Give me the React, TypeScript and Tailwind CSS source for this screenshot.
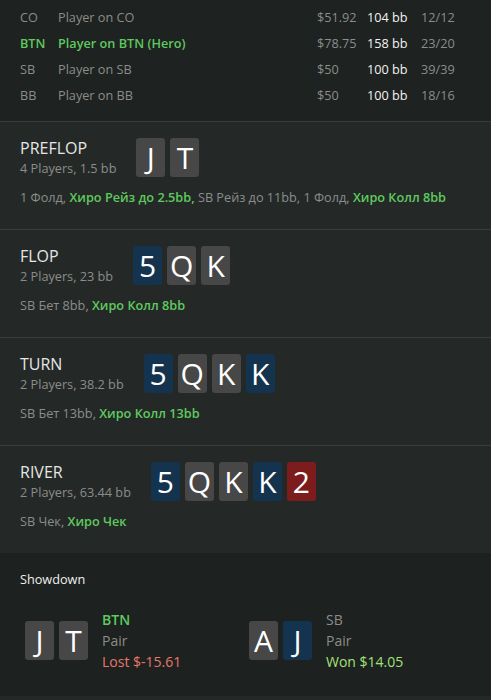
import type { ReactNode } from 'react'

type Tone = 'gray' | 'blue' | 'red'

const CARD_BG: Record<Tone, string> = {
  gray: 'bg-[#474747]',
  blue: 'bg-[#14334f]',
  red: 'bg-[#7d1c1c]',
}

const PLAYERS = [
  { pos: 'CO', name: 'Player on CO', stack: '$51.92', bb: '104 bb', ratio: '12/12', hero: false },
  { pos: 'BTN', name: 'Player on BTN (Hero)', stack: '$78.75', bb: '158 bb', ratio: '23/20', hero: true },
  { pos: 'SB', name: 'Player on SB', stack: '$50', bb: '100 bb', ratio: '39/39', hero: false },
  { pos: 'BB', name: 'Player on BB', stack: '$50', bb: '100 bb', ratio: '18/16', hero: false },
]

type Street = {
  name: string
  info: string
  cards: [string, Tone][]
  actions: ReactNode
}

const Hero = ({ children }: { children: ReactNode }) => (
  <span className="font-semibold text-[#5fc95f]">{children}</span>
)

const STREETS: Street[] = [
  {
    name: 'PREFLOP',
    info: '4 Players, 1.5 bb',
    cards: [
      ['J', 'gray'],
      ['T', 'gray'],
    ],
    actions: (
      <>
        1 Фолд, <Hero>Хиро Рейз до 2.5bb,</Hero> SB Рейз до 11bb, 1 Фолд, <Hero>Хиро Колл 8bb</Hero>
      </>
    ),
  },
  {
    name: 'FLOP',
    info: '2 Players, 23 bb',
    cards: [
      ['5', 'blue'],
      ['Q', 'gray'],
      ['K', 'gray'],
    ],
    actions: (
      <>
        SB Бет 8bb, <Hero>Хиро Колл 8bb</Hero>
      </>
    ),
  },
  {
    name: 'TURN',
    info: '2 Players, 38.2 bb',
    cards: [
      ['5', 'blue'],
      ['Q', 'gray'],
      ['K', 'gray'],
      ['K', 'blue'],
    ],
    actions: (
      <>
        SB Бет 13bb, <Hero>Хиро Колл 13bb</Hero>
      </>
    ),
  },
  {
    name: 'RIVER',
    info: '2 Players, 63.44 bb',
    cards: [
      ['5', 'blue'],
      ['Q', 'gray'],
      ['K', 'gray'],
      ['K', 'blue'],
      ['2', 'red'],
    ],
    actions: (
      <>
        SB Чек, <Hero>Хиро Чек</Hero>
      </>
    ),
  },
]

function Card({ rank, tone }: { rank: string; tone: Tone }) {
  return (
    <div
      className={`flex h-[39px] w-[29px] items-center justify-center rounded-[3px] text-[30px] leading-none text-white ${CARD_BG[tone]}`}
    >
      {rank}
    </div>
  )
}

export default function App() {
  return (
    <div
      className="h-[700px] w-[491px] overflow-hidden bg-[#242927] text-[12.7px] text-[#8c8c8c]"
      style={{ fontFamily: '"Open Sans", "Noto Sans", sans-serif' }}
    >
      <div className="bg-[#1e2220] px-5 pb-[12px] pt-[5px]">
        {PLAYERS.map((p) => (
          <div
            key={p.pos}
            className={`grid h-[26px] grid-cols-[38px_259px_50px_54px_auto] items-center ${
              p.hero ? 'font-semibold text-[#5fc95f]' : ''
            }`}
          >
            <span>{p.pos}</span>
            <span>{p.name}</span>
            <span className="font-normal text-[#8c8c8c]">{p.stack}</span>
            <span className="font-normal text-[#f2f2f2]">{p.bb}</span>
            <span className="font-normal text-[#8c8c8c]">{p.ratio}</span>
          </div>
        ))}
      </div>

      {STREETS.map((s) => (
        <div key={s.name} className="border-t border-[#363d3a] px-5 pb-[22px] pt-4">
          <div className="flex items-center gap-5">
            <div>
              <div className="text-[16px] leading-[21px] text-[#e6e6e6]">{s.name}</div>
              <div className="leading-[18px]">{s.info}</div>
            </div>
            <div className="flex gap-[5px]">
              {s.cards.map(([r, t], i) => (
                <Card key={i} rank={r} tone={t} />
              ))}
            </div>
          </div>
          <div className="mt-[10px] leading-[20px]">{s.actions}</div>
        </div>
      ))}

      <div className="bg-[#1d211f] px-5 pb-[24px] pt-[16px]">
        <div className="leading-[20px] text-[#f0f0f0]">Showdown</div>
        <div className="mt-[20px] flex pl-[5px]">
          <div className="flex w-[224px] items-center gap-[5px]">
            <Card rank="J" tone="gray" />
            <Card rank="T" tone="gray" />
            <div className="ml-[9px] text-[14px] leading-[21px]">
              <div className="font-semibold text-[#5fc95f]">BTN</div>
              <div>Pair</div>
              <div className="text-[#e8776b]">Lost $-15.61</div>
            </div>
          </div>
          <div className="flex items-center gap-[5px]">
            <Card rank="A" tone="gray" />
            <Card rank="J" tone="blue" />
            <div className="ml-[9px] text-[14px] leading-[21px]">
              <div>SB</div>
              <div>Pair</div>
              <div className="text-[#a3e27a]">Won $14.05</div>
            </div>
          </div>
        </div>
      </div>

      <div className="flex gap-2 pl-[218px] pt-[7px]">
        <button className="h-[30px] w-[135px] rounded-[4px] border border-[#3b4440]" />
        <button className="h-[30px] w-[106px] rounded-[4px] border border-[#3b4440]" />
      </div>
    </div>
  )
}
